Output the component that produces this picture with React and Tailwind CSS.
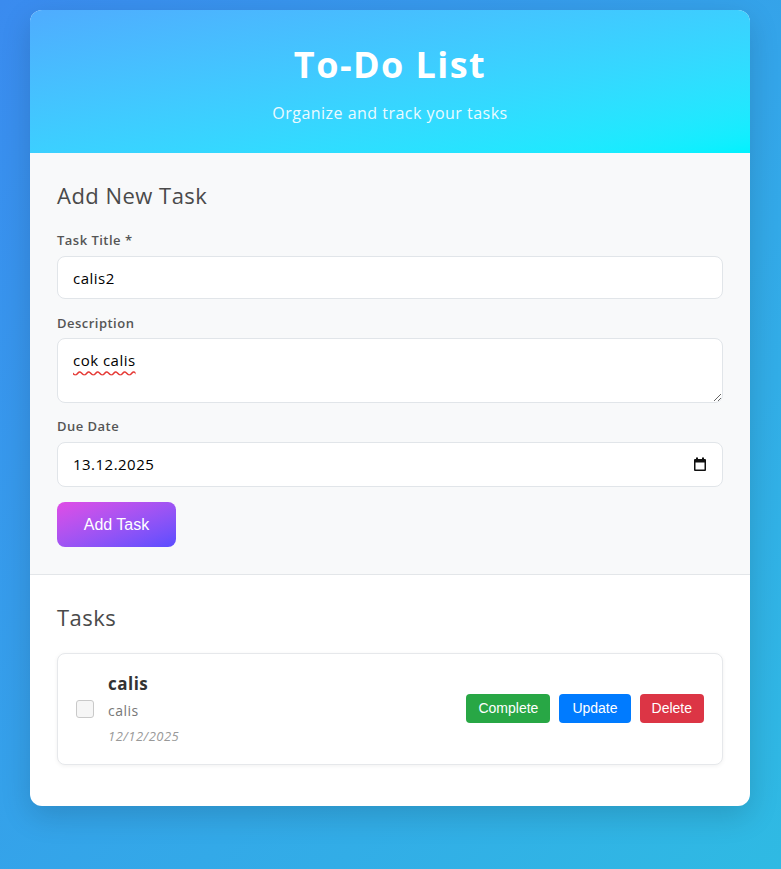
import { useState } from 'react';

const FONT = "font-['Open_Sans',sans-serif] tracking-[0.03em]";
const BUTTON_FONT = "font-['Liberation_Sans',Arial,sans-serif] tracking-normal";

/**
 * Small calendar glyph shown at the right of the due date field
 */
function CalendarIcon() {
  return (
    <svg width="14" height="15" viewBox="0 0 14 15" className="shrink-0">
      <rect x="1" y="2" width="12" height="12" rx="1" fill="#111" />
      <rect x="2.5" y="5.5" width="9" height="7" fill="#fff" />
      <rect x="3" y="0.5" width="2" height="3" fill="#111" />
      <rect x="9" y="0.5" width="2" height="3" fill="#111" />
    </svg>
  );
}

function Field({ label, gap = 'mb-[6px]', spacing = 'mb-[14px]', children }) {
  return (
    <div className={spacing}>
      <label className={`block ${gap} text-[13px] leading-5 font-semibold text-[#555]`}>
        {label}
      </label>
      {children}
    </div>
  );
}

function TaskItem({ task }) {
  return (
    <div className="flex items-center gap-[14px] bg-white border border-[#e6e8eb] rounded-lg px-[18px] pt-[17px] pb-[18px] shadow-[0_1px_4px_rgba(0,0,0,0.06)]">
      <input
        type="checkbox"
        className="appearance-none w-[18px] h-[18px] shrink-0 border border-[#c9c9c9] rounded-[3px] bg-[#f6f6f6]"
      />
      <div className="flex-1 min-w-0">
        <div className="text-[17px] leading-[25px] font-bold text-[#333] mb-[4px]">
          {task.title}
        </div>
        <div className="text-[14px] leading-[21px] text-[#777] mb-[5px]">
          {task.description}
        </div>
        <div className="text-[13px] leading-5 italic text-[#999]">{task.date}</div>
      </div>
      <div className={`flex items-center gap-[9px] ${BUTTON_FONT}`}>
        <button className="h-[29px] px-3 text-[14px] leading-[17px] text-white bg-[#28a745] rounded-[4px]">
          Complete
        </button>
        <button className="h-[29px] px-[13px] text-[14px] leading-[17px] text-white bg-[#007bff] rounded-[4px]">
          Update
        </button>
        <button className="h-[29px] px-3 text-[14px] leading-[17px] text-white bg-[#dc3545] rounded-[4px]">
          Delete
        </button>
      </div>
    </div>
  );
}

export default function App() {
  const [title, setTitle] = useState('calis2');
  const [description, setDescription] = useState('cok calis');
  const [dueDate, setDueDate] = useState('13.12.2025');
  const tasks = [{ id: 1, title: 'calis', description: 'calis', date: '12/12/2025' }];

  return (
    <div className={`min-h-screen bg-linear-to-br from-[#3a8bef] to-[#2fbae3] pt-[10px] pb-10 pl-[30px] pr-[31px] ${FONT}`}>
      <div className="w-full max-w-[720px] mx-auto bg-white rounded-xl overflow-hidden shadow-[0_10px_30px_rgba(0,0,0,0.15)]">
        {/* Header */}
        <header className="bg-linear-to-br from-[#4facfe] to-[#00f2fe] text-white text-center py-[28px]">
          <h1 className="text-[36px] leading-[54px] font-bold tracking-[0.04em]">To-Do List</h1>
          <p className="mt-[9px] text-[16px] leading-6 font-medium opacity-90">Organize and track your tasks</p>
        </header>

        {/* Add task form */}
        <section className="bg-[#f8f9fa] border-b border-[#e3e6e9] px-[27px] pt-[26px] pb-[27px]">
          <h2 className="text-[22px] leading-[33px] font-medium text-[#4a4a4a] mb-[18px]">Add New Task</h2>
          <Field label="Task Title *">
            <input
              value={title}
              onChange={(e) => setTitle(e.target.value)}
              className="block w-full h-[43px] px-[15px] bg-white border border-[#e1e5e9] rounded-lg text-[15px] text-black outline-none"
            />
          </Field>
          <Field label="Description" gap="mb-[5px]" spacing="mb-[13px]">
            <textarea
              value={description}
              onChange={(e) => setDescription(e.target.value)}
              spellCheck={false}
              className="block w-full h-[65px] px-[15px] py-[10px] bg-white border border-[#e1e5e9] rounded-lg text-[15px] leading-[22px] text-black outline-none underline decoration-wavy decoration-[#e53935] underline-offset-4"
            />
          </Field>
          <Field label="Due Date">
            <div className="flex items-center h-[45px] px-[15px] bg-white border border-[#e1e5e9] rounded-lg">
              <input
                value={dueDate}
                onChange={(e) => setDueDate(e.target.value)}
                className="flex-1 min-w-0 bg-transparent text-[15px] text-black outline-none"
              />
              <CalendarIcon />
            </div>
          </Field>
          <button className={`mt-[1px] w-[119px] h-[45px] rounded-lg bg-linear-to-br from-[#e04be6] to-[#5a4cff] text-white text-[16px] ${BUTTON_FONT}`}>
            Add Task
          </button>
        </section>

        {/* Task list */}
        <section className="px-[27px] pt-[26px] pb-[41px]">
          <h2 className="text-[22px] leading-[33px] font-medium text-[#4a4a4a] mb-[19px]">Tasks</h2>
          <div className="flex flex-col gap-3">
            {tasks.map((task) => (
              <TaskItem key={task.id} task={task} />
            ))}
          </div>
        </section>
      </div>
    </div>
  );
}
